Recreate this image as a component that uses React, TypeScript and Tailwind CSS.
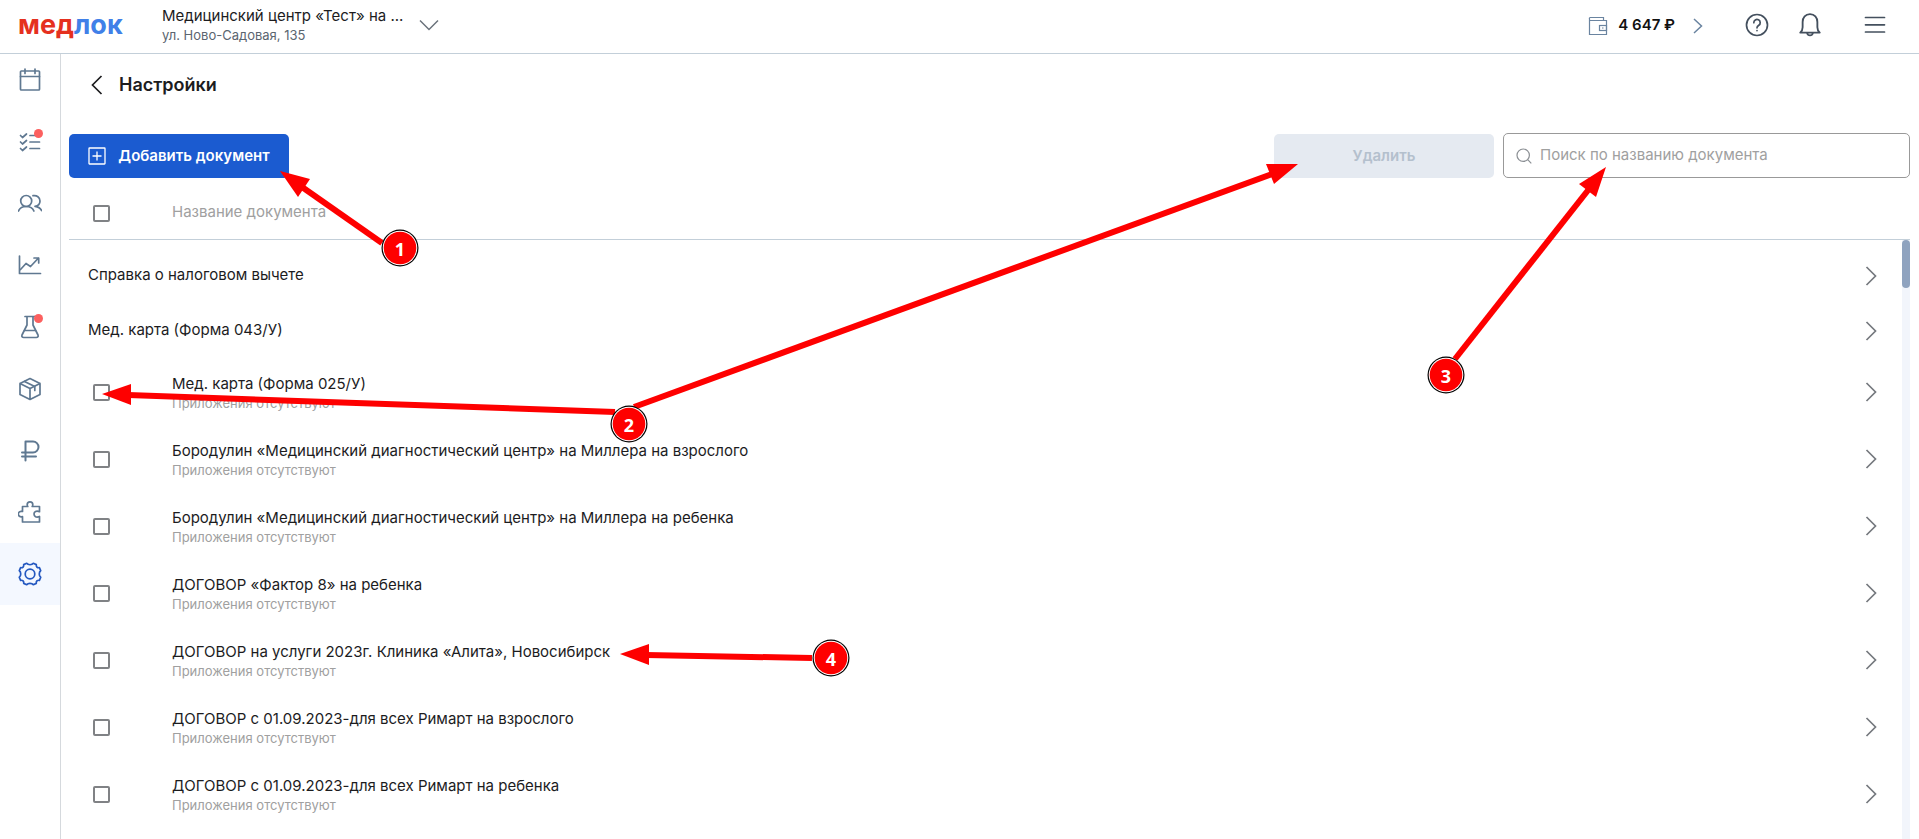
import type { ReactNode } from "react";
import clsx from "clsx";

type Doc = { id: number; title: string; system?: boolean };

const documents: Doc[] = [
  { id: 1, title: "Справка о налоговом вычете", system: true },
  { id: 2, title: "Мед. карта (Форма 043/У)", system: true },
  { id: 3, title: "Мед. карта (Форма 025/У)" },
  { id: 4, title: "Бородулин «Медицинский диагностический центр» на Миллера на взрослого" },
  { id: 5, title: "Бородулин «Медицинский диагностический центр» на Миллера на ребенка" },
  { id: 6, title: "ДОГОВОР «Фактор 8» на ребенка" },
  { id: 7, title: "ДОГОВОР на услуги 2023г. Клиника «Алита», Новосибирск" },
  { id: 8, title: "ДОГОВОР с 01.09.2023-для всех Римарт на взрослого" },
  { id: 9, title: "ДОГОВОР с 01.09.2023-для всех Римарт на ребенка" },
];

function Icon({ children, className }: { children: ReactNode; className?: string }) {
  return (
    <svg
      viewBox="0 0 24 24"
      fill="none"
      stroke="currentColor"
      strokeWidth="1.7"
      strokeLinecap="round"
      strokeLinejoin="round"
      aria-hidden="true"
      className={clsx("shrink-0", className ?? "size-6")}
    >
      {children}
    </svg>
  );
}

const navItems: { label: string; icon: ReactNode; badge?: boolean; active?: boolean }[] = [
  {
    label: "Расписание",
    icon: (
      <>
        <rect x="2.5" y="3" width="19" height="19" rx="0.8" />
        <path d="M2.5 8.5h19M7 1v4.5M17 1v4.5" />
      </>
    ),
  },
  {
    label: "Задачи",
    badge: true,
    icon: (
      <>
        <path d="M12 5.5h9.5M12 12h9.5M12 18.5h9.5" />
        <path d="m2.5 5.5 2 2 4-3.5M2.5 12l2 2 4-3.5M2.5 18.5l2 2 4-3.5" />
      </>
    ),
  },
  {
    label: "Пациенты",
    icon: (
      <>
        <circle cx="8.2" cy="10" r="5.5" />
        <path d="M.5 20c1.200-3 4-4.500 7.700-4.500s6.500 1.500 7.700 4.500" />
        <path d="M15 4.700c3.800-.8 7 1.700 7 5.300 0 3-2.200 5-5 5.300 3.200.3 5.500 2 6.500 4.200" />
      </>
    ),
  },
  {
    label: "Аналитика",
    icon: (
      <>
        <path d="M1.500 3v17.500h21" />
        <path d="m2.500 16.500 5.500-6 4.500 3L20.500 5M16 5h4.700v5" />
      </>
    ),
  },
  {
    label: "Лаборатория",
    badge: true,
    icon: (
      <>
        <path d="M7 1.500h10M9 1.500v8.500l-5 10c-.6 1.500.2 2.500 1.700 2.500h12.600c1.500 0 2.300-1 1.700-2.500L15 10V1.500" />
        <path d="M6.500 15.500h11" />
      </>
    ),
  },
  {
    label: "Склад",
    icon: (
      <>
        <path d="M12 1.500 22 6.500v11L12 22.500 2 17.500v-11zM2 6.500l10 5 10-5M12 11.500v11" />
        <path d="m6.500 4.500 10.300 5v4" />
      </>
    ),
  },
  {
    label: "Финансы",
    icon: <path d="M7.500 21.500V2.500H15a5.500 5.500 0 0 1 0 11H4M4 17.500h14" strokeWidth="2" />,
  },
  {
    label: "Модули",
    icon: (
      <path d="M4.500 6.500h5.300c-.5-.7-.6-1.200-.6-1.800a2.800 2.800 0 0 1 5.600 0c0 .6-.1 1.100-.6 1.800h7.300v5.200c-3.300-1.400-5.500.1-5.500 2.400s2.200 3.800 5.500 2.400v5.500h-17v-5.300c-2.600.6-4.200-.8-4.200-2.600s1.600-3.200 4.200-2.600z" />
    ),
  },
  {
    label: "Настройки",
    active: true,
    icon: (
      <>
        <circle cx="12" cy="12" r="4.8" />
        <path d="M8.700 1.300c1.300 1.900 5.300 1.900 6.600 0l3 1.300c-.3 2.200.9 3.400 3.100 3.100l1.300 3c-1.900 1.300-1.900 5.300 0 6.600l-1.300 3c-2.200-.3-3.400.9-3.100 3.100l-3 1.300c-1.300-1.900-5.300-1.900-6.600 0l-3-1.300c.3-2.200-.9-3.400-3.100-3.100l-1.300-3c1.900-1.300 1.900-5.300 0-6.600l1.300-3c2.200.3 3.400-.9 3.100-3.100z" />
      </>
    ),
  },
];

function Header() {
  return (
    <header className="flex h-[54px] shrink-0 items-center border-b border-[#c3cfd9] bg-white pr-8 pl-[18px]">
      <a href="#" className="w-36 pb-1 text-[27px] leading-7 font-bold text-[#e5301f]">
        мед<span className="text-[#4080e8]">лок</span>
      </a>
      <button type="button" className="flex items-center gap-4 pb-1 text-left">
        <span className="block">
          <span className="block leading-5">Медицинский центр «Тест» на ...</span>
          <span className="block text-[13px] leading-[18px] text-[#5b6570]">ул. Ново-Садовая, 135</span>
        </span>
        <svg viewBox="0 0 20 12" fill="none" stroke="#6b737c" strokeWidth="1.5" className="h-3 w-5" aria-hidden="true">
          <path d="m1 1.500 9 9 9-9" />
        </svg>
      </button>

      <div className="ml-auto flex items-center pb-1 text-[#44505e]">
        <button type="button" className="mr-[42px] flex items-center gap-2.5 pt-0.5 text-[#6a84a0]">
          <svg viewBox="0 0 20 20" fill="none" stroke="currentColor" strokeWidth="1.2" className="size-5" aria-hidden="true">
            <path d="M1.500 18.500V3a1 1 0 0 1 1-1.500h13v3M1.500 4.500h17v14h-17z" />
            <rect x="11.5" y="9.5" width="7" height="5" />
            <path d="M14 12h1.500" />
          </svg>
          <span className="font-semibold text-[#111]">4 647 ₽</span>
          <svg viewBox="0 0 10 16" fill="none" stroke="currentColor" strokeWidth="1.5" className="ml-2 h-4 w-[10px]" aria-hidden="true">
            <path d="m1 1 7.500 7L1 15" />
          </svg>
        </button>
        <button type="button" aria-label="Помощь" className="mr-7">
          <Icon>
            <circle cx="12" cy="12" r="10.5" />
            <path d="M8.800 9.700a3.200 3.200 0 1 1 5 2.600c-1.200.8-1.800 1.300-1.800 2.500M12 17.500v.1" />
          </Icon>
        </button>
        <button type="button" aria-label="Уведомления" className="mr-10">
          <Icon className="size-[26px]">
            <path d="M3 19h18c-1.600-1.500-2.200-3-2.200-5V9.300C18.800 5 16.200 2 12 2S5.200 5 5.200 9.300V14c0 2-.6 3.500-2.200 5zM9.300 19.500a2.800 2.800 0 0 0 5.400 0" />
          </Icon>
        </button>
        <button type="button" aria-label="Меню">
          <Icon>
            <path d="M2.500 4.500h19M2.500 11.800h19M2.500 19h19" />
          </Icon>
        </button>
      </div>
    </header>
  );
}

function Sidebar() {
  return (
    <nav className="w-[61px] shrink-0 border-r border-[#d5d9dd]">
      <ul className="-mt-[5px] grid h-[556px] grid-rows-9">
        {navItems.map((item) => (
          <li key={item.label}>
            <a
              href="#"
              aria-label={item.label}
              className={clsx(
                "flex h-full items-center justify-center",
                item.active ? "bg-[#f4f8ff] text-[#2458c0]" : "text-[#5f7891]",
              )}
            >
              <span className="relative">
                <Icon>{item.icon}</Icon>
                {item.badge ? (
                  <span className="absolute -top-px -right-px size-[9px] rounded-full bg-[#fc605f]" />
                ) : null}
              </span>
            </a>
          </li>
        ))}
      </ul>
    </nav>
  );
}

function Checkbox({ label }: { label: string }) {
  return (
    <input
      type="checkbox"
      aria-label={label}
      className="block size-[17px] appearance-none rounded-xs border-2 border-[#808285] bg-white checked:bg-[#1b5bd0]"
    />
  );
}

function RowLink({ title }: { title: string }) {
  return (
    <a href="#" aria-label={title} className="flex justify-center">
      <svg viewBox="0 0 12 20" fill="none" stroke="#75797e" strokeWidth="1.7" className="h-5 w-3" aria-hidden="true">
        <path d="m1.500 1 9 9-9 9" />
      </svg>
    </a>
  );
}

function DocumentsTable() {
  return (
    <div className="flex min-h-0 flex-1">
      <table className="w-full self-start text-left">
        <thead>
          <tr className="h-[61px] border-b border-[#c3cfd9]">
            <th className="w-[103px] pt-2.5 pl-6">
              <Checkbox label="Выбрать все" />
            </th>
            <th className="pt-2 font-normal text-[#a0a0a0]">Название документа</th>
            <th className="w-[62px]" aria-label="Открыть" />
          </tr>
        </thead>
        <tbody>
          <tr className="h-[9px]" />
          {documents.map((doc) =>
            doc.system ? (
              <tr key={doc.id} className="h-[55px]">
                <td colSpan={2} className="pl-[19px]">
                  {doc.title}
                </td>
                <td>
                  <RowLink title={doc.title} />
                </td>
              </tr>
            ) : (
              <tr key={doc.id} className="h-[67px]">
                <td className="pt-0.5 pl-6">
                  <Checkbox label={doc.title} />
                </td>
                <td className="pt-0.5">
                  <p className="leading-5">{doc.title}</p>
                  <p className="text-[13px] leading-[18px] text-[#a0a0a0]">Приложения отсутствуют</p>
                </td>
                <td>
                  <RowLink title={doc.title} />
                </td>
              </tr>
            ),
          )}
        </tbody>
      </table>
      <div className="flex w-2 shrink-0 flex-col">
        <div className="h-[62px] shrink-0 border-b border-[#c3cfd9]" />
        <div className="flex-1 bg-[#f2f5fb]">
          <div className="h-12 rounded-full bg-[#8fa3bf]" />
        </div>
      </div>
    </div>
  );
}

// line: from the marker to the base of the head, head: tip and the two corners
const arrows = [
  { line: "M382 243 302 187", head: "280,171 310,179 298,197" },
  { line: "M615 412 128 395", head: "102,394 131,384 131,405" },
  { line: "M634 407 1272 174", head: "1298,164 1266,164 1274,184" },
  { line: "M1455 359 1589 189", head: "1606,167 1579,184 1596,197" },
  { line: "M812 658 646 655", head: "620,654 649,644 649,665" },
];

const markers = [
  { n: 1, x: 400, y: 248 },
  { n: 2, x: 629, y: 424 },
  { n: 3, x: 1446, y: 375 },
  { n: 4, x: 831, y: 658 },
];

function Annotations() {
  return (
    <svg viewBox="0 0 1919 839" className="pointer-events-none absolute top-0 left-0 h-full w-full">
      {arrows.map((a) => (
        <g key={a.head}>
          <path d={a.line} stroke="#fe0000" strokeWidth="6" fill="none" />
          <polygon points={a.head} fill="#fe0000" />
        </g>
      ))}
      {markers.map((m) => (
        <g key={m.n}>
          <circle cx={m.x} cy={m.y} r="18.5" fill="#000" />
          <circle cx={m.x} cy={m.y} r="17.3" fill="#fff" />
          <circle cx={m.x} cy={m.y} r="16.3" fill="#fe0000" />
          <text
            x={m.x}
            y={m.y + 8}
            textAnchor="middle"
            fill="#fff"
            className="font-['Open_Sans',sans-serif] text-lg font-bold"
          >
            {m.n}
          </text>
        </g>
      ))}
    </svg>
  );
}

export default function App() {
  return (
    <div className="relative flex h-screen flex-col overflow-hidden bg-white font-[Inter,sans-serif] text-[15px] text-[#1c1c1e]">
      <Header />
      <div className="flex min-h-0 flex-1">
        <Sidebar />
        <main className="flex min-w-0 flex-1 flex-col pr-[9px] pl-2">
          <div className="flex h-[62px] shrink-0 items-center gap-4 pl-[22px]">
            <button type="button" aria-label="Назад">
              <svg viewBox="0 0 12 20" fill="none" stroke="#1c1c1e" strokeWidth="1.7" className="h-5 w-3" aria-hidden="true">
                <path d="m10.500 1-9 9 9 9" />
              </svg>
            </button>
            <h1 className="text-lg font-semibold">Настройки</h1>
          </div>

          <div className="mt-[17px] flex h-[45px] shrink-0 items-end gap-[9px]">
            <button
              type="button"
              className="flex h-11 w-[220px] items-center justify-center gap-3 rounded-[5px] bg-[#1b5bd0] font-semibold text-white"
            >
              <svg viewBox="0 0 18 18" fill="none" stroke="currentColor" className="size-[18px]" aria-hidden="true">
                <rect x="1" y="1" width="16" height="16" rx="0.5" strokeWidth="1.3" />
                <path d="M9 4.500v9M4.500 9h9" strokeWidth="1.3" />
              </svg>
              Добавить документ
            </button>
            <button
              type="button"
              disabled
              className="ml-auto h-11 w-[220px] rounded-[5px] bg-[#e5eaf1] font-semibold text-[#b4c0cd]"
            >
              Удалить
            </button>
            <label className="flex h-[45px] w-[407px] items-center gap-2 rounded-[5px] border border-[#999] pl-3">
              <svg viewBox="0 0 16 16" fill="none" stroke="#8b8f94" strokeWidth="1.2" className="size-4" aria-hidden="true">
                <circle cx="7.2" cy="7.2" r="6.2" />
                <path d="m11.700 11.700 3.600 3.600" />
              </svg>
              <input
                type="search"
                aria-label="Поиск по названию документа"
                placeholder="Поиск по названию документа"
                className="min-w-0 flex-1 outline-none placeholder:text-[#a0a0a0]"
              />
            </label>
          </div>

          <DocumentsTable />
        </main>
      </div>
      <Annotations />
    </div>
  );
}
